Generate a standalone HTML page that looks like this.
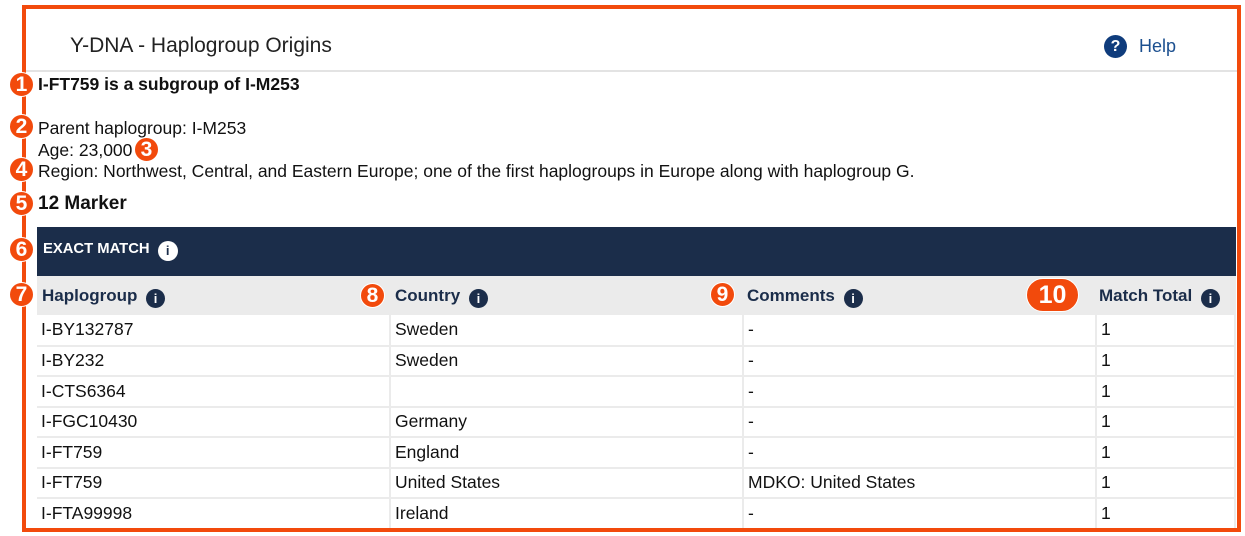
<!DOCTYPE html>
<html><head><meta charset="utf-8"><style>
*{box-sizing:border-box;margin:0;padding:0}
body{width:1245px;height:536px;background:#fff;font-family:"Liberation Sans",Arial,sans-serif;color:#111;position:relative;overflow:hidden}
.frame{position:absolute;left:22px;top:5px;width:1219px;height:527px;border:4px solid #f24a0c}
.hdr{position:absolute;left:26px;top:9px;width:1211px;height:63px;border-bottom:2px solid #e3e3e3}
.title{position:absolute;left:70px;top:34px;font-size:21px;color:#222}
.help{position:absolute;left:1104px;top:35px;font-size:18px;color:#1b4f8f;display:flex;align-items:center}
.help .q{width:23px;height:23px;border-radius:50%;background:#0f3c7c;color:#fff;font-weight:bold;font-size:16px;text-align:center;line-height:23px;margin-right:12px}
.t{position:absolute;left:38px;font-size:17.5px}
.b{position:absolute;width:25px;height:25px;border-radius:50%;background:#f24a0c;color:#fff;font-weight:bold;font-size:21px;text-align:center;line-height:24px;border:1px solid #fff}
.dark{position:absolute;left:37px;top:227px;width:1199px;height:49px;background:#1b2d4a;color:#fff;font-weight:bold;font-size:14.8px;padding:14px 0 0 6px}
.ic{display:inline-block;width:19px;height:19px;border-radius:50%;background:#1b2d4a;color:#fff;font-size:13px;font-weight:bold;text-align:center;line-height:19px;vertical-align:-2px;margin-left:4px;font-style:normal}
.dark .ic{background:#fff;color:#1b2d4a;width:20px;height:20px;line-height:20px}
.ch{position:absolute;left:37px;top:276px;width:1199px;height:39px;background:#ebebeb}
.ch span{position:absolute;top:10px;font-size:17px;font-weight:bold;color:#1b2d4a;white-space:nowrap}
table{position:absolute;left:37px;top:315px;width:1199px;border-collapse:collapse}
td{height:30.5px;border:2px solid #ebebeb;border-top:none;font-size:17.5px;padding:0 4px;vertical-align:middle}
tr td:first-child{border-left:none}
</style></head><body>
<div class="hdr"></div>
<div class="title">Y-DNA - Haplogroup Origins</div>
<div class="help"><span class="q">?</span>Help</div>
<div class="t" style="top:74px;font-weight:bold">I-FT759 is a subgroup of I-M253</div>
<div class="t" style="top:118px">Parent haplogroup: I-M253</div>
<div class="t" style="top:140px">Age: 23,000</div>
<div class="t" style="top:161px">Region: Northwest, Central, and Eastern Europe; one of the first haplogroups in Europe along with haplogroup G.</div>
<div class="t" style="top:193px;font-size:19px;font-weight:bold">12 Marker</div>
<div class="dark">EXACT MATCH <span class="ic">i</span></div>
<div class="ch">
<span style="left:5px">Haplogroup <i class="ic">i</i></span>
<span style="left:358px">Country <i class="ic">i</i></span>
<span style="left:710px">Comments <i class="ic">i</i></span>
<span style="left:1062px">Match Total <i class="ic">i</i></span>
</div>
<table>
<tr><td style="width:353px">I-BY132787</td><td style="width:353px">Sweden</td><td style="width:353px">-</td><td>1</td></tr>
<tr><td>I-BY232</td><td>Sweden</td><td>-</td><td>1</td></tr>
<tr><td>I-CTS6364</td><td></td><td>-</td><td>1</td></tr>
<tr><td>I-FGC10430</td><td>Germany</td><td>-</td><td>1</td></tr>
<tr><td>I-FT759</td><td>England</td><td>-</td><td>1</td></tr>
<tr><td>I-FT759</td><td>United States</td><td>MDKO: United States</td><td>1</td></tr>
<tr><td>I-FTA99998</td><td>Ireland</td><td>-</td><td>1</td></tr>
</table>
<div class="frame"></div>
<div class="b" style="left:9px;top:72px">1</div>
<div class="b" style="left:9px;top:114px">2</div>
<div class="b" style="left:134px;top:137px">3</div>
<div class="b" style="left:9px;top:157px">4</div>
<div class="b" style="left:9px;top:191px">5</div>
<div class="b" style="left:9px;top:237px">6</div>
<div class="b" style="left:9px;top:282px">7</div>
<div class="b" style="left:360px;top:283px">8</div>
<div class="b" style="left:710px;top:282px">9</div>
<div class="b" style="left:1026px;top:278px;width:53px;height:34px;border-radius:17px;line-height:32px;font-size:25px">10</div>
</body></html>
